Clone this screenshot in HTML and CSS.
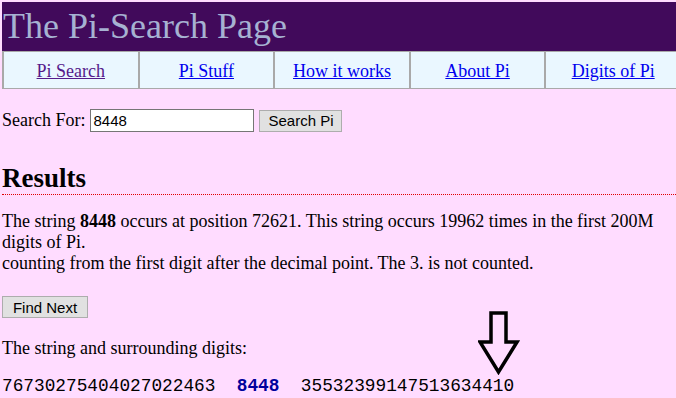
FILE: index.html
```html
<!DOCTYPE html>
<html lang="en">
  <head>
    <meta charset="UTF-8" />
    <title>The Pi-Search Page</title>
    <link rel="stylesheet" href="styles.css">
  </head>
  <body>
    <div class="banner">The Pi-Search Page</div>
    <div class="nav">
      <div class="nav-cell"><a href="#" class="visited">Pi Search</a></div>
      <div class="nav-cell"><a href="#">Pi Stuff</a></div>
      <div class="nav-cell"><a href="#">How it works</a></div>
      <div class="nav-cell"><a href="#">About Pi</a></div>
      <div class="nav-cell"><a href="#">Digits of Pi</a></div>
    </div>

    <form class="search-form">
      Search For: <input type="text" class="search-in" value="8448" /> <button type="button" class="btn">Search Pi</button>
    </form>

    <h2 class="results-title">Results</h2>
    <p class="results-text">The string <b>8448</b> occurs at position 72621. This string occurs 19962 times in the first 200M digits of Pi.<br>counting from the first digit after the decimal point. The 3. is not counted.</p>

    <div class="next-row"><button type="button" class="btn">Find Next</button></div>

    <div class="digits-box">
      <p class="digits-label">The string and surrounding digits:</p>
      <svg class="arrow" width="42" height="64" viewBox="0 0 42 64">
        <path d="M13 2 H28 V31 H39 L20.5 61 L2 31 H13 Z" fill="none" stroke="#000" stroke-width="3.5" stroke-linejoin="miter"/>
      </svg>
      <div class="digits">76730275404027022463  <b class="hit">8448</b>  35532399147513634410</div>
    </div>
  </body>
</html>
```

FILE: styles.css
```css
body {
  margin: 0;
  padding: 2px 0 0 2px;
  background: #ffdcff;
  font-family: "Liberation Serif", "Times New Roman", serif;
  font-size: 18px;
  color: #000;
  overflow: hidden;
}
.banner {
  background: #410a5b;
  color: #a6b2d2;
  font-size: 36px;
  line-height: 40px;
  padding: 4px 0 5px 1px;
}
.nav {
  display: flex;
  width: 678px;
  border-top: 1px solid #a9a9a9;
  border-bottom: 1px solid #a9a9a9;
  background: #a9a9a9;
}
.nav-cell {
  flex: 1;
  height: 36px;
  margin-left: 2px;
  background: #eaf7ff;
  display: grid;
  place-items: center;
}
.nav-cell:first-child {
  margin-left: 0;
  border-left: 2px solid #a9a9a9;
}
.nav a {
  color: #0000ee;
  line-height: 20px;
  padding-top: 1px;
}
.nav a.visited {
  color: #551a8b;
}
.search-form {
  margin: 20px 0 0 0;
  height: 23px;
  display: flex;
  align-items: center;
  white-space: nowrap;
}
.search-in {
  width: 158px;
  height: 19px;
  margin: 0 4px 0 5px;
  padding: 1px 2px;
  border: 1px solid #767676;
  font-family: "Liberation Sans", Arial, sans-serif;
  font-size: 15px;
  background: #fff;
}
.btn {
  height: 22px;
  padding: 0;
  border: 1px solid #adadad;
  background: #e1e1e1;
  font-family: "Liberation Sans", Arial, sans-serif;
  font-size: 15px;
  color: #000;
  white-space: nowrap;
}
.search-form .btn {
  width: 83px;
  margin-left: 1px;
}
.results-title {
  font-size: 27px;
  margin: 31px 0 0 0;
  border-bottom: 1px dotted #e00000;
}
.results-text {
  margin: 16px 0 0 0;
}
.next-row {
  margin-top: 22px;
  height: 22px;
}
.next-row .btn {
  width: 86px;
}
.digits-box {
  position: relative;
}
.digits-label {
  margin: 20px 0 0 0;
}
.arrow {
  position: absolute;
  left: 476px;
  top: -27px;
}
.digits {
  font-family: "Liberation Mono", "Courier New", monospace;
  font-size: 17.8px;
  white-space: pre;
  margin-top: 17px;
}
.hit {
  color: #00009c;
}
```
